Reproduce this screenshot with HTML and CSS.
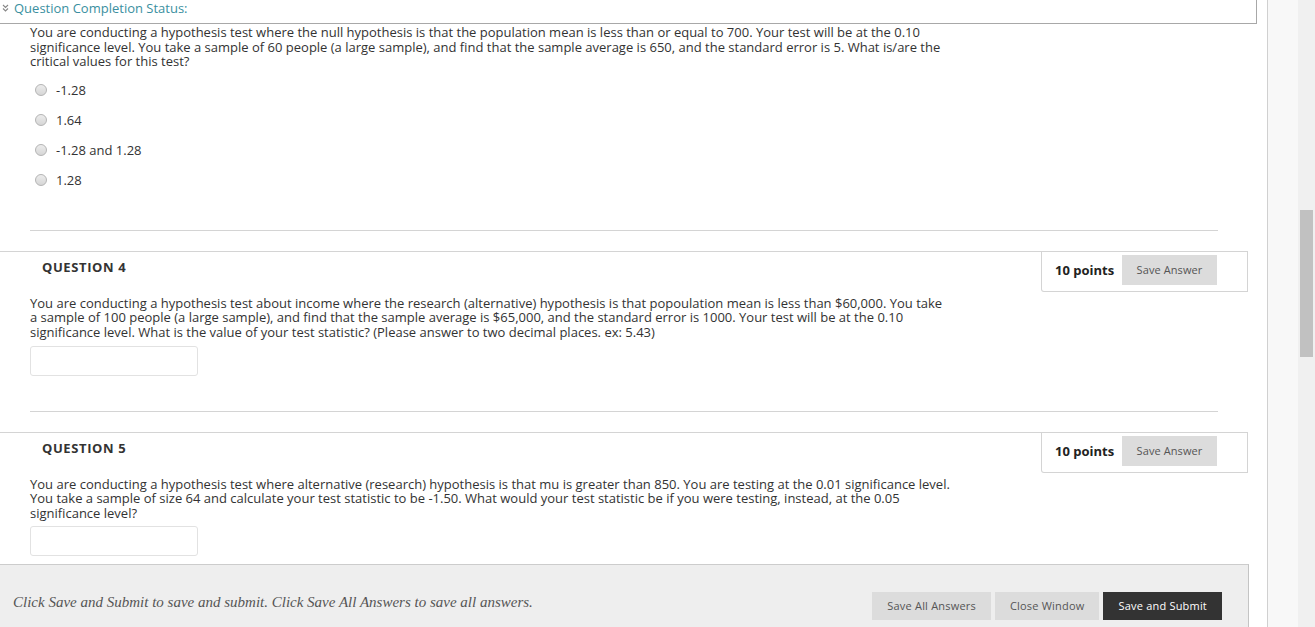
FILE: index.html
```html
<!DOCTYPE html>
<html>
<head>
    <meta charset="UTF-8">
    <link rel="stylesheet" href="styles.css">
</head>
<body>
    <div class="page">
        <div class="main">
            <div class="status-bar">
                <svg class="chev" width="7" height="8" viewBox="0 0 7 8"><path d="M1 1 L3.5 3.5 L6 1 M1 4.5 L3.5 7 L6 4.5" fill="none" stroke="#888" stroke-width="1.1"/></svg>
                <span class="status-title">Question Completion Status:</span>
            </div>

            <div class="question-body first">
                <p class="q-text">You are conducting a hypothesis test where the null hypothesis is that the population mean is less than or equal to 700. Your test will be at the 0.10 significance level. You take a sample of 60 people (a large sample), and find that the sample average is 650, and the standard error is 5. What is/are the critical values for this test?</p>
                <ul class="options">
                    <li><span class="radio"></span>-1.28</li>
                    <li><span class="radio"></span>1.64</li>
                    <li><span class="radio"></span>-1.28 and 1.28</li>
                    <li><span class="radio"></span>1.28</li>
                </ul>
            </div>
            <div class="sep"></div>

            <div class="q-head">
                <h3 class="q-title">QUESTION 4</h3>
                <div class="points-box">
                    <span class="points">10 points</span>
                    <button class="btn-save">Save Answer</button>
                </div>
            </div>
            <div class="question-body">
                <p class="q-text">You are conducting a hypothesis test about income where the research (alternative) hypothesis is that popoulation mean is less than $60,000. You take a sample of 100 people (a large sample), and find that the sample average is $65,000, and the standard error is 1000. Your test will be at the 0.10 significance level. What is the value of your test statistic? (Please answer to two decimal places. ex: 5.43)</p>
                <input type="text" class="answer">
            </div>
            <div class="sep"></div>

            <div class="q-head">
                <h3 class="q-title">QUESTION 5</h3>
                <div class="points-box">
                    <span class="points">10 points</span>
                    <button class="btn-save">Save Answer</button>
                </div>
            </div>
            <div class="question-body">
                <p class="q-text">You are conducting a hypothesis test where alternative (research) hypothesis is that mu is greater than 850. You are testing at the 0.01 significance level. You take a sample of size 64 and calculate your test statistic to be -1.50. What would your test statistic be if you were testing, instead, at the 0.05 significance level?</p>
                <input type="text" class="answer">
            </div>

            <div class="footer">
                <p class="footer-text">Click Save and Submit to save and submit. Click Save All Answers to save all answers.</p>
                <div class="footer-buttons">
                    <button class="btn">Save All Answers</button>
                    <button class="btn">Close Window</button>
                    <button class="btn btn-dark">Save and Submit</button>
                </div>
            </div>
        </div>
        <div class="scroll">
            <div class="track"><div class="thumb"></div></div>
        </div>
    </div>
</body>
</html>
```

FILE: styles.css
```css
* {
    box-sizing: border-box;
}

body {
    margin: 0;
    font-family: "Open Sans", Arial, sans-serif;
    font-size: 13px;
    color: #333;
    background-color: #fff;
    overflow: hidden;
}

.page {
    display: flex;
    width: 1315px;
    height: 627px;
    overflow: hidden;
}

.main {
    width: 1268px;
    flex-shrink: 0;
    border-right: 1px solid #d0d0d0;
}

.status-bar {
    display: flex;
    align-items: flex-start;
    width: 1257px;
    height: 24px;
    border-right: 1px solid #a8a8a8;
    border-bottom: 1px solid #a8a8a8;
    padding-left: 2px;
}

.chev {
    margin: 4px 5px 0 0;
}

.status-title {
    color: #3a8fa0;
    font-size: 13px;
    line-height: 16px;
}

.question-body {
    padding-left: 30px;
    padding-top: 4px;
}

.question-body.first {
    padding-top: 1px;
}

.q-text {
    margin: 0;
    width: 922px;
    line-height: 14.6px;
}

.options {
    list-style: none;
    margin: 6px 0 0 0;
    padding: 0;
}

.options li {
    display: flex;
    align-items: center;
    height: 30px;
    padding-left: 5px;
}

.radio {
    width: 12px;
    height: 12px;
    border-radius: 50%;
    border: 1px solid #b4b4b4;
    background: linear-gradient(#ececec, #d6d6d6);
    margin-right: 9px;
}

.answer {
    display: block;
    width: 168px;
    height: 30px;
    margin-top: 6px;
    border: 1px solid #e2e2e2;
    border-radius: 3px;
}

.sep {
    width: 1188px;
    height: 1px;
    margin: 35px 0 0 30px;
    background-color: #d4d4d4;
}

.q-head {
    display: flex;
    justify-content: space-between;
    width: 1248px;
    margin-top: 20px;
    border-top: 1px solid #d4d4d4;
}

.q-title {
    margin: 6px 0 0 42px;
    font-size: 13px;
    letter-spacing: 0.6px;
    font-weight: bold;
    color: #333;
}

.points-box {
    display: flex;
    align-items: center;
    width: 207px;
    height: 40px;
    padding: 3px 30px 6px 13px;
    border: 1px solid #d4d4d4;
    border-top: none;
    border-bottom-left-radius: 3px;
}

.points {
    font-size: 13px;
    font-weight: bold;
    color: #222;
    margin-right: auto;
}

.btn-save {
    width: 95px;
    height: 30px;
    border: none;
    background-color: #dcdcdc;
    font-family: "Open Sans", Arial, sans-serif;
    font-size: 11px;
    letter-spacing: 0.1px;
    color: #555;
    padding: 0;
}

.footer {
    display: flex;
    align-items: center;
    width: 1249px;
    height: 80px;
    margin-top: 8px;
    background-color: #eee;
    border-top: 1px solid #ccc;
    border-right: 1px solid #c4c4c4;
    padding: 0 26px 0 13px;
}

.footer-text {
    margin: 0 auto 4px 0;
    font-family: "Liberation Serif", Georgia, serif;
    font-style: italic;
    font-size: 15px;
    color: #555;
}

.footer-buttons {
    display: flex;
    gap: 4px;
    margin-top: 2px;
}

.btn {
    height: 28px;
    border: none;
    background-color: #dcdcdc;
    font-family: "Open Sans", Arial, sans-serif;
    font-size: 11px;
    letter-spacing: 0.2px;
    color: #555;
    padding: 0 15px;
}

.btn-dark {
    background-color: #333;
    color: #fff;
}

.scroll {
    display: flex;
    justify-content: flex-end;
    flex: 1;
    background-color: #f8f8f8;
}

.track {
    width: 17px;
    background-color: #f0f0f0;
    padding: 210px 2px 0 2px;
}

.thumb {
    width: 13px;
    height: 147px;
    background-color: #c1c1c1;
}
```
